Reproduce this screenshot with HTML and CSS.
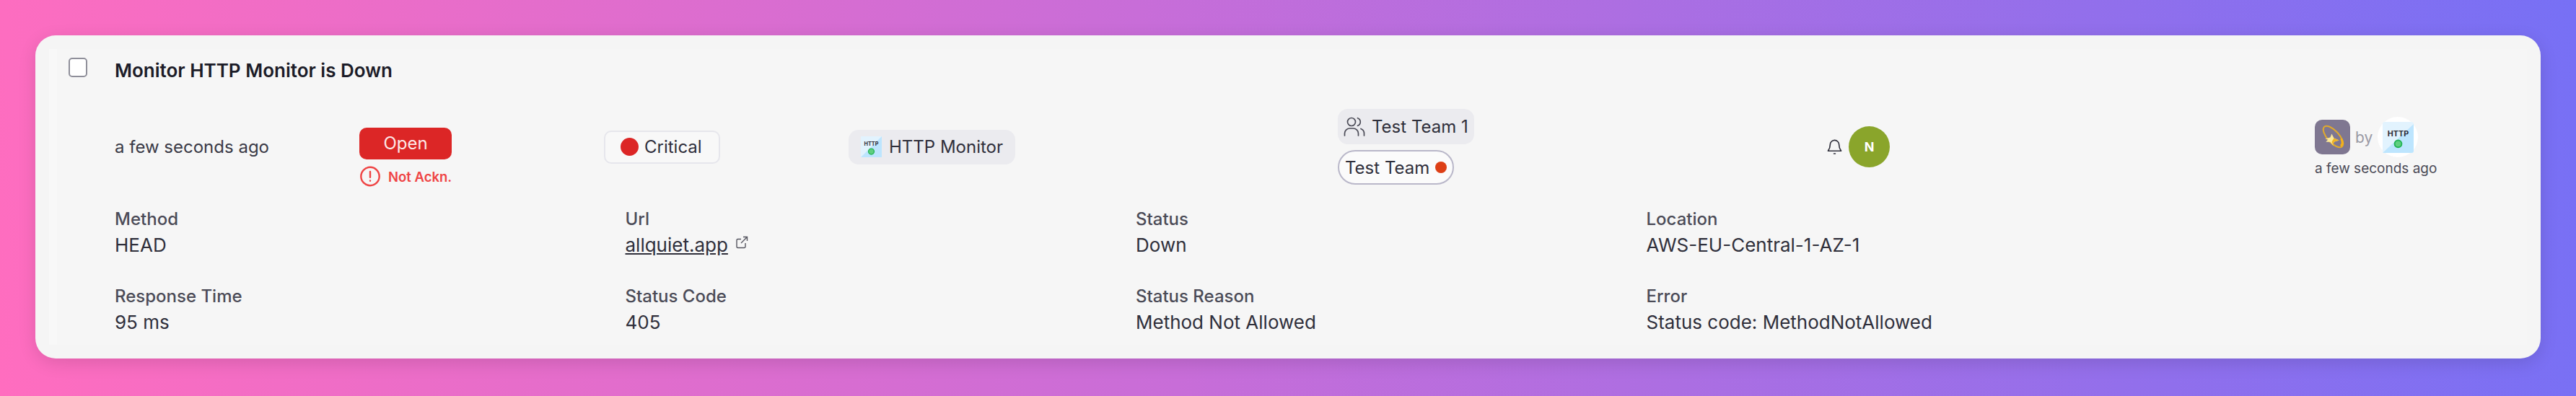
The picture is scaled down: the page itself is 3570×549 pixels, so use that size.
FILE: index.html
```html
<!DOCTYPE html>
<html lang="en">
<head>
  <meta charset="UTF-8" />
  <title>Incident card</title>
  <link rel="stylesheet" href="styles.css">
</head>
<body>
  <div class="card">
    <div class="inner">
      <div class="header">
        <span class="checkbox"></span>
        <h3 class="title">Monitor HTTP Monitor is Down</h3>
      </div>

      <div class="summary">
        <div class="cell time">a few seconds ago</div>
        <div class="cell status">
          <span class="open">Open</span>
          <div class="ack">
            <svg class="ack-icon" viewBox="0 0 24 24" fill="none" stroke="currentColor" stroke-width="2" stroke-linecap="round"><circle cx="12" cy="12" r="10.5"/><path d="M12 6.5v6.5M12 17v.1"/></svg>
            Not Ackn.
          </div>
        </div>
        <div class="cell">
          <span class="severity"><i class="dot-red"></i>Critical</span>
        </div>
        <div class="cell span-2">
          <span class="source">
            <svg class="http-small" viewBox="0 0 44 44">
              <rect width="44" height="44" fill="#e2f3fe"/>
              <path d="M44 0V44H0Z" fill="#bde5fe"/>
              <text x="22" y="20" text-anchor="middle" class="http-text">HTTP</text>
              <circle cx="22" cy="32" r="6" fill="#5fcf80" stroke="#22b455" stroke-width="2"/>
            </svg>
            HTTP Monitor
          </span>
        </div>
        <div class="cell span-2 teams">
          <span class="team">
            <svg class="users" viewBox="0 0 30 30" fill="none" stroke="#4b4b57" stroke-width="1.7" stroke-linecap="round"><circle cx="11" cy="8" r="5.5"/><path d="M1.5 27v-3a7 7 0 0 1 7-7h5a7 7 0 0 1 7 7v3M19.500 2.700a5.600 5.600 0 0 1 0 10.600M24 17.500a7 7 0 0 1 4.500 6.500v3"/></svg>
            Test Team 1
          </span>
          <span class="team-oncall">Test Team<i class="dot-orange"></i></span>
        </div>
        <div class="cell span-2 responders">
          <svg class="bell" viewBox="0 0 22 24" fill="none" stroke="#2f2f3b" stroke-width="1.7" stroke-linecap="round" stroke-linejoin="round"><path d="M4.500 9a6.500 6.500 0 0 1 13 0c0 5.500 2.500 8 3 9H1.500c.5-1 3-3.500 3-9Z"/><path d="M10 22h2"/></svg>
          <span class="avatar">N</span>
        </div>
        <div class="cell meta">
          <div class="meta-top">
            <span class="logo">
              <svg viewBox="0 0 48 48" fill="none">
                <ellipse cx="25" cy="23" rx="8" ry="18" transform="rotate(-42 25 23)" stroke="#e0a92e" stroke-width="2"/>
                <path d="M35 35.500a8 18 -42 0 0 1-10" stroke="#f5b21a" stroke-width="3"/>
                <path d="M14 26l7-2 2-5 3 6 7 3-7 2-1 5-4-5-6 0 3-3Z" fill="#fbe89a"/>
                <path d="M26 25l7 3-7 2-1 5-2-5Z" fill="#f0b322"/>
              </svg>
            </span>
            <span class="by">by</span>
            <span class="http-ring">
              <svg class="http-big" viewBox="0 0 44 44">
                <rect width="44" height="44" rx="3" fill="#e2f3fe"/>
                <path d="M44 3V41a3 3 0 0 1-3 3H0Z" fill="#bde5fe"/>
                <text x="22" y="20" text-anchor="middle" class="http-text">HTTP</text>
                <circle cx="22" cy="31" r="5" fill="#5fcf80" stroke="#22b455" stroke-width="2"/>
              </svg>
            </span>
          </div>
          <div class="meta-time">a few seconds ago</div>
        </div>
      </div>

      <div class="details">
        <div class="field"><div class="label">Method</div><div class="value">HEAD</div></div>
        <div class="field">
          <div class="label">Url</div>
          <div class="value">
            <a class="link" href="#">allquiet.app</a>
            <svg class="ext" viewBox="0 0 18 18" fill="none" stroke="#55555f" stroke-width="1.400"><path d="M14 10v5a1.500 1.500 0 0 1-1.500 1.500h-9A1.500 1.500 0 0 1 2 15V6a1.500 1.500 0 0 1 1.500-1.500H8M11 1.500h5.500V7M16.500 1.500 8 10"/></svg>
          </div>
        </div>
        <div class="field"><div class="label">Status</div><div class="value">Down</div></div>
        <div class="field"><div class="label">Location</div><div class="value">AWS-EU-Central-1-AZ-1</div></div>
        <div class="field"><div class="label">Response Time</div><div class="value">95 ms</div></div>
        <div class="field"><div class="label">Status Code</div><div class="value">405</div></div>
        <div class="field"><div class="label">Status Reason</div><div class="value">Method Not Allowed</div></div>
        <div class="field"><div class="label">Error</div><div class="value">Status code: MethodNotAllowed</div></div>
      </div>
    </div>
  </div>
</body>
</html>
```

FILE: styles.css
```css
body {
  margin: 0;
  height: 549px;
  overflow: hidden;
  font-family: Inter, "Liberation Sans", sans-serif;
  color: #2f2f3b;
  background: linear-gradient(84deg, #ff6dbf 0%, #c86dd8 45%, #7770f5 100%);
}

.card {
  margin: 49px 49px 0;
  height: 448px;
  box-sizing: border-box;
  padding: 19px;
  background-color: #f5f5f5;
  border-radius: 28px;
  box-shadow: 0 6px 24px rgba(0, 0, 0, 0.12);
}

.inner {
  height: 100%;
  box-sizing: border-box;
  padding-top: 12px;
  border-left: 11px solid #f8f8f8;
  background-color: #f6f6f6;
}

.header {
  display: flex;
  align-items: flex-start;
  padding-left: 16px;
}

.checkbox {
  width: 26px;
  height: 27px;
  box-sizing: border-box;
  background-color: #fff;
  border: 2px solid #8f8f9a;
  border-radius: 5px;
}

.title {
  margin: 0 0 0 38px;
  font-size: 26px;
  line-height: 36px;
  font-weight: 600;
  color: #1c1c28;
}

.summary {
  display: grid;
  grid-template-columns: repeat(9, 339px) 1fr;
  align-items: center;
  margin-top: 32px;
  padding-left: 80px;
  font-size: 24px;
  min-height: 105px;
}

.span-2 {
  grid-column: span 2;
}

.time {
  color: #3a3a46;
}

.status {
  align-self: start;
  padding-top: 29px;
}

.open {
  display: block;
  width: 128px;
  height: 44px;
  line-height: 44px;
  text-align: center;
  color: #fde8e8;
  background-color: #dc2626;
  border-radius: 10px;
}

.ack {
  display: flex;
  align-items: center;
  gap: 10px;
  margin-top: 9px;
  font-size: 18.500px;
  font-weight: 600;
  color: #ef4444;
}

.ack-icon {
  width: 30px;
  height: 29px;
}

.severity {
  display: inline-flex;
  align-items: center;
  box-sizing: border-box;
  height: 46px;
  padding: 0 23px 0 21px;
  gap: 8px;
  background-color: #f8f8f8;
  border: 2px solid #e6e6ec;
  border-radius: 10px;
}

.dot-red {
  width: 25px;
  height: 25px;
  border-radius: 50%;
  background-color: #dc2626;
}

.source {
  display: inline-flex;
  align-items: center;
  gap: 10px;
  height: 48px;
  padding: 0 17px;
  background-color: #ebebef;
  border-radius: 14px;
}

.http-small {
  width: 29px;
  height: 29px;
}

.http-text {
  font-size: 11px;
  font-weight: 700;
  fill: #2b2b35;
}

.teams {
  display: flex;
  flex-direction: column;
  align-items: flex-start;
  gap: 8px;
}

.team {
  display: inline-flex;
  align-items: center;
  gap: 9px;
  height: 49px;
  padding: 0 8px 0 8px;
  background-color: #ebebef;
  border-radius: 14px;
}

.users {
  width: 30px;
  height: 30px;
}

.team-oncall {
  display: inline-flex;
  align-items: center;
  gap: 8px;
  box-sizing: border-box;
  height: 48px;
  padding: 0 8px;
  background-color: #fbfbfb;
  border: 2px solid #b9b7c9;
  border-radius: 24px;
}

.dot-orange {
  width: 16px;
  height: 16px;
  border-radius: 50%;
  background-color: #dd3f16;
}

.responders {
  display: flex;
  align-items: center;
  gap: 9px;
}

.bell {
  width: 21px;
  height: 23px;
}

.avatar {
  width: 57px;
  height: 57px;
  line-height: 57px;
  text-align: center;
  border-radius: 50%;
  font-size: 18px;
  font-weight: 700;
  color: #fff;
  background-color: #8aa52b;
}

.meta {
  white-space: nowrap;
  margin-left: -2px;
}

.meta-top {
  display: flex;
  align-items: center;
}

.logo {
  display: block;
  width: 49px;
  height: 48px;
  background-color: #7f7791;
  border-radius: 10px;
}

.logo svg {
  display: block;
}

.by {
  margin: 0 7px;
  font-size: 21px;
  color: #9a9aa5;
}

.http-ring {
  display: flex;
  align-items: center;
  justify-content: center;
  width: 56px;
  height: 56px;
  background-color: #fff;
  border-radius: 50%;
}

.http-big {
  width: 43px;
  height: 43px;
}

.meta-time {
  margin-top: 4px;
  font-size: 19px;
  color: #4b4b57;
}

.details {
  display: grid;
  grid-template-columns: repeat(4, 707.5px);
  row-gap: 41px;
  margin-top: 30px;
  padding-left: 80px;
}

.label {
  font-size: 24px;
  line-height: 30px;
  font-weight: 500;
  color: #4b4b57;
}

.value {
  margin-top: 6px;
  font-size: 26px;
  line-height: 30px;
  color: #2f2f3b;
}

.link {
  color: inherit;
}

.ext {
  width: 18px;
  height: 18px;
  margin-left: 3px;
  vertical-align: 4px;
}
```
